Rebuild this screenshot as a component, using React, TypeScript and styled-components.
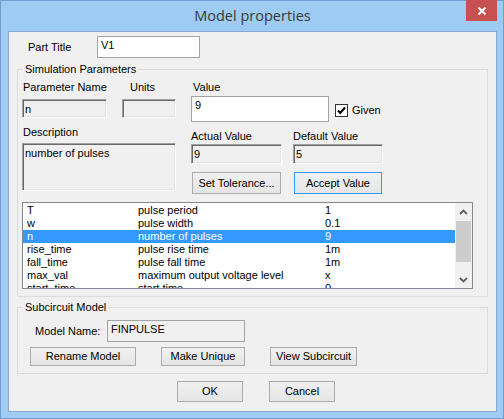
import React from "react"
import styled, { createGlobalStyle } from "styled-components"

const GlobalStyle = createGlobalStyle`
  html, body {
    margin: 0;
    padding: 0;
    background: #ffffff;
  }
  * {
    box-sizing: border-box;
  }
`

const Window = styled.div`
  width: 504px;
  height: 419px;
  border: 1px solid #6f9fd0;
  background: #9dcbf3;
  padding: 0 6px 6px 7px;
  display: flex;
  flex-direction: column;
  font-family: "Liberation Sans", Arial, sans-serif;
  font-size: 11px;
  color: #000;
`

const TitleBar = styled.div`
  height: 30px;
  display: grid;
  grid-template-columns: 1fr auto 1fr;
  align-items: start;
`

const Title = styled.div`
  grid-column: 2;
  margin-top: 5px;
  font-family: "Open Sans", "Noto Sans", sans-serif;
  font-size: 14.5px;
  line-height: 20px;
  color: #3a3a3a;
`

const CloseButton = styled.div`
  grid-column: 3;
  justify-self: end;
  width: 31px;
  height: 21px;
  margin-top: -1px;
  background: #c75050;
  display: flex;
  align-items: center;
  justify-content: center;
`

const Client = styled.div`
  flex: 1;
  border: 1px solid #85a9cf;
  background: #f0f0f0;
  display: flex;
  flex-direction: column;
`

const Row = styled.div<{ $top?: number; $left?: number; $gap?: number }>`
  display: flex;
  align-items: center;
  margin-top: ${p => p.$top ?? 0}px;
  padding-left: ${p => p.$left ?? 0}px;
  gap: ${p => p.$gap ?? 0}px;
`

const Label = styled.div<{ $width?: number; $indent?: number }>`
  width: ${p => (p.$width ? `${p.$width}px` : "auto")};
  padding-left: ${p => p.$indent ?? 0}px;
  line-height: 13px;
  height: 13px;
  white-space: nowrap;
`

const TextBox = styled.div<{ $width: number; $height: number; $readOnly?: boolean }>`
  width: ${p => p.$width}px;
  height: ${p => p.$height}px;
  border: 1px solid #a3a3a3;
  background: ${p => (p.$readOnly ? "#f0f0f0" : "#ffffff")};
  padding: 2px 3px;
  line-height: 13px;
`

const SunkenBox = styled.div<{ $width: number; $height: number }>`
  width: ${p => p.$width}px;
  height: ${p => p.$height}px;
  border-top: 1px solid #a0a0a0;
  border-left: 1px solid #a0a0a0;
  border-bottom: 1px solid #ffffff;
  border-right: 1px solid #ffffff;
  box-shadow: inset 1px 1px 0 #696969, inset -1px -1px 0 #e3e3e3;
  background: #f0f0f0;
  padding: 3px 2px;
  line-height: 13px;
`

const Group = styled.fieldset<{ $top: number; $bottom: number }>`
  margin: ${p => p.$top}px 0 0 8px;
  width: 471px;
  border: 1px solid #dcdcdc;
  padding: 0 0 ${p => p.$bottom}px 0;
  min-width: 0;
`

const Legend = styled.legend`
  margin-left: 5px;
  padding: 0 2px;
  line-height: 13px;
  font-size: 11px;
`

const Columns = styled.div`
  display: flex;
  padding-left: 4px;
  gap: 15px;
`

const Column = styled.div<{ $width: number }>`
  width: ${p => p.$width}px;
  display: flex;
  flex-direction: column;
`

const Stack = styled.div<{ $width?: number; $top?: number }>`
  display: flex;
  flex-direction: column;
  width: ${p => (p.$width ? `${p.$width}px` : "auto")};
  margin-top: ${p => p.$top ?? 0}px;
`

const Button = styled.div<{ $width: number; $height: number; $default?: boolean }>`
  width: ${p => p.$width}px;
  height: ${p => p.$height}px;
  border: 1px solid ${p => (p.$default ? "#3399ff" : "#acacac")};
  background: linear-gradient(#f0f0f0, #e5e5e5);
  display: flex;
  align-items: center;
  justify-content: center;
  line-height: 13px;
  white-space: nowrap;
`

const CheckBox = styled.div`
  width: 13px;
  height: 13px;
  border: 1px solid #333333;
  background: #ffffff;
  display: flex;
  align-items: center;
  justify-content: center;
`

const ListBox = styled.div`
  margin: 8px 0 0 4px;
  width: 451px;
  height: 87px;
  border: 1px solid #828790;
  background: #ffffff;
  display: flex;
  overflow: hidden;
`

const ListRows = styled.div`
  flex: 1;
  padding-top: 1px;
  overflow: hidden;
`

const ListRow = styled.div<{ $selected?: boolean }>`
  display: flex;
  height: 13px;
  line-height: 13px;
  padding-left: 4px;
  background: ${p => (p.$selected ? "#3399ff" : "transparent")};
  color: ${p => (p.$selected ? "#ffffff" : "#000000")};
  white-space: nowrap;
`

const Cell = styled.div<{ $width?: number }>`
  width: ${p => (p.$width ? `${p.$width}px` : "auto")};
  flex: ${p => (p.$width ? "none" : "1")};
`

const ScrollBar = styled.div`
  width: 17px;
  background: #f0f0f0;
  display: flex;
  flex-direction: column;
  align-items: center;
`

const ScrollArrow = styled.div`
  width: 17px;
  height: 17px;
  display: flex;
  align-items: center;
  justify-content: center;
`

const Thumb = styled.div`
  width: 15px;
  height: 41px;
  margin-top: 1px;
  background: #cdcdcd;
`

const Track = styled.div`
  flex: 1;
`

const Chevron = ({ down }: { down?: boolean }) => (
  <svg width="9" height="6" viewBox="0 0 9 6">
    <path
      d={down ? "M1 1 L4.5 4.5 L8 1" : "M1 5 L4.5 1.5 L8 5"}
      fill="none"
      stroke="#606060"
      strokeWidth="1.8"
    />
  </svg>
)

const params = [
  ["T", "pulse period", "1"],
  ["w", "pulse width", "0.1"],
  ["n", "number of pulses", "9"],
  ["rise_time", "pulse rise time", "1m"],
  ["fall_time", "pulse fall time", "1m"],
  ["max_val", "maximum output voltage level", "x"],
  ["start_time", "start time", "0"],
]

export default function App() {
  return (
    <>
      <GlobalStyle />
      <Window>
        <TitleBar>
          <Title>Model properties</Title>
          <CloseButton>
            <svg width="10" height="10" viewBox="0 0 10 10">
              <path d="M1.5 1.5 L8.5 8.5 M8.5 1.5 L1.5 8.5" stroke="#ffffff" strokeWidth="2" />
            </svg>
          </CloseButton>
        </TitleBar>
        <Client>
          <Row $top={4} $left={19}>
            <Label $width={69}>Part Title</Label>
            <TextBox $width={103} $height={22}>V1</TextBox>
          </Row>

          <Group $top={5} $bottom={7}>
            <Legend>Simulation Parameters</Legend>
            <Columns>
              <Column $width={154}>
                <Row $top={5} $gap={15}>
                  <Label $width={85} $indent={1}>Parameter Name</Label>
                  <Label $indent={8}>Units</Label>
                </Row>
                <Row $top={5} $gap={15}>
                  <SunkenBox $width={85} $height={19}>n</SunkenBox>
                  <SunkenBox $width={54} $height={19} />
                </Row>
                <Stack $top={8}>
                  <Label $indent={1}>Description</Label>
                </Stack>
                <Stack $top={4}>
                  <SunkenBox $width={154} $height={48}>number of pulses</SunkenBox>
                </Stack>
              </Column>
              <Column $width={200}>
                <Stack $top={5}>
                  <Label $indent={2}>Value</Label>
                </Stack>
                <Row $top={2} $gap={6}>
                  <TextBox $width={138} $height={26}>9</TextBox>
                  <Row $gap={4} $top={2}>
                    <CheckBox>
                      <svg width="11" height="11" viewBox="0 0 11 11">
                        <path
                          d="M2 5.5 L4.3 8 L9 2.5"
                          fill="none"
                          stroke="#000"
                          strokeWidth="2"
                        />
                      </svg>
                    </CheckBox>
                    <Label>Given</Label>
                  </Row>
                </Row>
                <Row $top={8} $gap={11}>
                  <Stack $width={91}>
                    <Label>Actual Value</Label>
                    <Stack $top={1}>
                      <SunkenBox $width={91} $height={20}>9</SunkenBox>
                    </Stack>
                  </Stack>
                  <Stack $width={90}>
                    <Label>Default Value</Label>
                    <Stack $top={1}>
                      <SunkenBox $width={90} $height={20}>5</SunkenBox>
                    </Stack>
                  </Stack>
                </Row>
                <Row $top={8} $gap={13} $left={1}>
                  <Button $width={89} $height={22}>Set Tolerance...</Button>
                  <Button $width={88} $height={22} $default>Accept Value</Button>
                </Row>
              </Column>
            </Columns>
            <ListBox>
              <ListRows>
                {params.map(([name, desc, value]) => (
                  <ListRow key={name} $selected={name === "n"}>
                    <Cell $width={111}>{name}</Cell>
                    <Cell $width={187}>{desc}</Cell>
                    <Cell>{value}</Cell>
                  </ListRow>
                ))}
              </ListRows>
              <ScrollBar>
                <ScrollArrow>
                  <Chevron />
                </ScrollArrow>
                <Thumb />
                <Track />
                <ScrollArrow>
                  <Chevron down />
                </ScrollArrow>
              </ScrollBar>
            </ListBox>
          </Group>

          <Group $top={4} $bottom={7}>
            <Legend>Subcircuit Model</Legend>
            <Row $top={6} $left={17}>
              <Label $width={72}>Model Name:</Label>
              <TextBox $width={138} $height={22} $readOnly>FINPULSE</TextBox>
            </Row>
            <Row $top={5} $left={12} $gap={25}>
              <Button $width={106} $height={19}>Rename Model</Button>
              <Button $width={84} $height={19}>Make Unique</Button>
              <Button $width={87} $height={19}>View Subcircuit</Button>
            </Row>
          </Group>

          <Row $top={7} $left={168} $gap={26}>
            <Button $width={66} $height={21}>OK</Button>
            <Button $width={66} $height={21}>Cancel</Button>
          </Row>
        </Client>
      </Window>
    </>
  )
}
